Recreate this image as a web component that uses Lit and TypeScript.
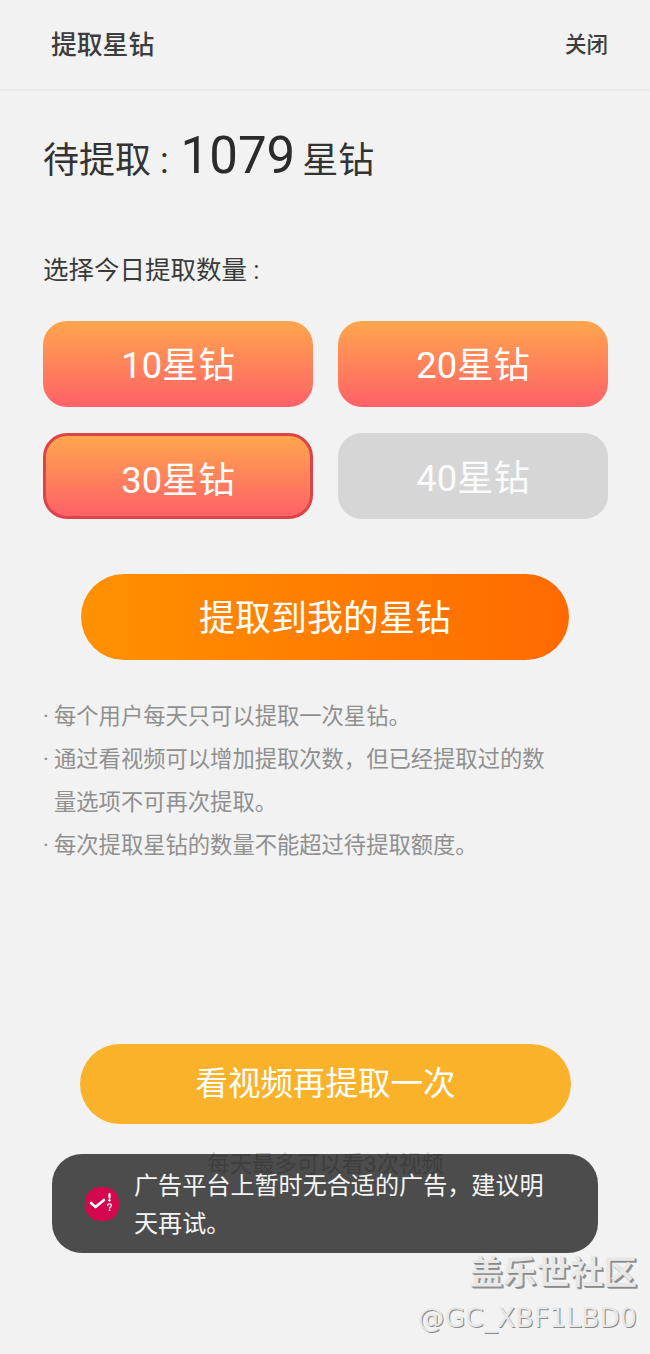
import { LitElement, html, css, svg } from "lit";
import { customElement } from "lit/decorators.js";

const AMOUNTS = [
  { value: 10, cls: "" },
  { value: 20, cls: "" },
  { value: 30, cls: "selected" },
  { value: 40, cls: "used" },
];

const toastIcon = svg`
  <svg class="toast-icon" width="34" height="34" viewBox="0 0 34 34">
    <path fill="#d5084f" d="M17 0C27 0 34 5 34 17C34 29 27 34 17 34C7 34 0 29 0 17C0 5 7 0 17 0Z"/>
    <path fill="none" stroke="#fff" stroke-width="2.6" stroke-linecap="round" stroke-linejoin="round" d="M6 16l4.5 4L19 13"/>
    <path fill="none" stroke="#fff" stroke-width="2.2" stroke-linecap="round" d="M24.5 7v3.6"/>
    <circle cx="24.5" cy="13.2" r="1.2" fill="#fff"/>
    <path fill="none" stroke="#fff" stroke-width="1.3" stroke-linecap="round" d="M22.7 18.6c0-2.4 3.7-2.4 3.7 0c0 1.4-1.8 1.4-1.8 2.6"/>
    <circle cx="24.6" cy="23.2" r="0.9" fill="#fff"/>
  </svg>
`;

@customElement("app-root")
export class AppRoot extends LitElement {
  static styles = css`
    :host {
      display: block;
      position: relative;
      width: 650px;
      height: 1354px;
      overflow: hidden;
      background: #f2f2f2;
      font-family: Roboto, "Noto Sans CJK SC", sans-serif;
    }
    .header {
      box-sizing: border-box;
      height: 91px;
      padding: 0 42px 4px 51px;
      display: flex;
      align-items: center;
      justify-content: space-between;
      border-bottom: 2px solid #e9e9e9;
      color: #3d3d3d;
    }
    .title {
      font-size: 25.8px;
      font-weight: 500;
    }
    .close {
      font-size: 21.5px;
      font-weight: 500;
    }
    .main {
      padding: 0 42px 0 43px;
    }
    .pending {
      margin-top: 35px;
      height: 60px;
      line-height: 60px;
      font-size: 36px;
      color: #333;
      white-space: nowrap;
    }
    .pending b {
      font-size: 51px;
      font-weight: 400;
      color: #2b2b2b;
      margin: 0 7px 0 3px;
    }
    .label {
      margin-top: 64px;
      height: 40px;
      line-height: 40px;
      font-size: 25.5px;
      color: #3a3a3a;
    }
    .amounts {
      margin-top: 31px;
      display: grid;
      grid-template-columns: 270px 270px;
      gap: 26px 25px;
    }
    .amount {
      box-sizing: border-box;
      height: 86px;
      padding-bottom: 4px;
      border-radius: 24px;
      display: flex;
      align-items: center;
      justify-content: center;
      font-size: 36.3px;
      color: #fff;
      background: linear-gradient(#ffa64d, #ff6168);
    }
    .amount.selected {
      padding-bottom: 0;
      padding-top: 2px;
      border: 3px solid #dc4448;
    }
    .amount.used {
      padding-bottom: 2px;
      background: #d6d6d6;
      color: #fbfbfb;
    }
    .extract {
      margin: 55px 39px 0 38px;
      height: 86px;
      padding-bottom: 4px;
      box-sizing: border-box;
      border-radius: 43px;
      display: flex;
      align-items: center;
      justify-content: center;
      font-size: 36px;
      color: #fff;
      background: linear-gradient(90deg, #ff9100, #ff6a00);
    }
    .notes {
      margin: 35px 0 0;
      padding: 0;
      list-style: none;
      width: 512px;
      font-size: 22.3px;
      line-height: 43px;
      color: #8f8f8f;
    }
    .notes li {
      position: relative;
      padding-left: 11px;
    }
    .notes li::before {
      content: "·";
      position: absolute;
      left: 0;
    }
    .video {
      margin: 177px 37px 0;
      height: 80px;
      padding-bottom: 8px;
      box-sizing: border-box;
      border-radius: 40px;
      display: flex;
      align-items: center;
      justify-content: center;
      font-size: 32.5px;
      color: #fff;
      background: #f9b22a;
    }
    .limit {
      margin-top: 21px;
      line-height: 38px;
      text-align: center;
      font-size: 22.4px;
      color: #c4c4c4;
    }
    .toast {
      position: absolute;
      left: 52px;
      top: 1154px;
      box-sizing: border-box;
      width: 546px;
      height: 99px;
      padding: 2px 44px 0 33px;
      display: flex;
      align-items: center;
      gap: 15px;
      border-radius: 30px;
      background: rgba(0, 0, 0, 0.686);
      color: #f5f5f5;
      font-size: 24.1px;
      line-height: 38px;
    }
    .toast-icon {
      flex: none;
      margin-top: -2px;
    }
    .watermark {
      position: absolute;
      right: 13px;
      top: 1252px;
      text-align: right;
      color: #e8e8e8;
      white-space: nowrap;
    }
    .wm-name {
      font-size: 33.5px;
      line-height: 42px;
      font-weight: 700;
      text-shadow: 1px 1px 0 #888, 2px 2px 0 #999;
    }
    .wm-user {
      margin-top: 2px;
      line-height: 44px;
      letter-spacing: 0.2px;
      font-family: "DejaVu Sans", "Noto Sans CJK SC", sans-serif;
      font-size: 26.4px;
      text-shadow: 1px 1px 0 #8a8a8a;
    }
  `;

  render() {
    return html`
      <div class="header">
        <span class="title">提取星钻</span>
        <span class="close">关闭</span>
      </div>
      <div class="main">
        <div class="pending">待提取 : <b>1079</b>星钻</div>
        <div class="label">选择今日提取数量 :</div>
        <div class="amounts">
          ${AMOUNTS.map(
            (a) => html`<div class="amount ${a.cls}">${a.value}星钻</div>`
          )}
        </div>
        <div class="extract">提取到我的星钻</div>
        <ul class="notes">
          <li>每个用户每天只可以提取一次星钻。</li>
          <li>通过看视频可以增加提取次数，但已经提取过的数量选项不可再次提取。</li>
          <li>每次提取星钻的数量不能超过待提取额度。</li>
        </ul>
        <div class="video">看视频再提取一次</div>
        <div class="limit">每天最多可以看3次视频</div>
      </div>
      <div class="toast">
        ${toastIcon}
        <span>广告平台上暂时无合适的广告，建议明天再试。</span>
      </div>
      <div class="watermark">
        <div class="wm-name">盖乐世社区</div>
        <div class="wm-user">@GC_XBF1LBD0</div>
      </div>
    `;
  }
}
